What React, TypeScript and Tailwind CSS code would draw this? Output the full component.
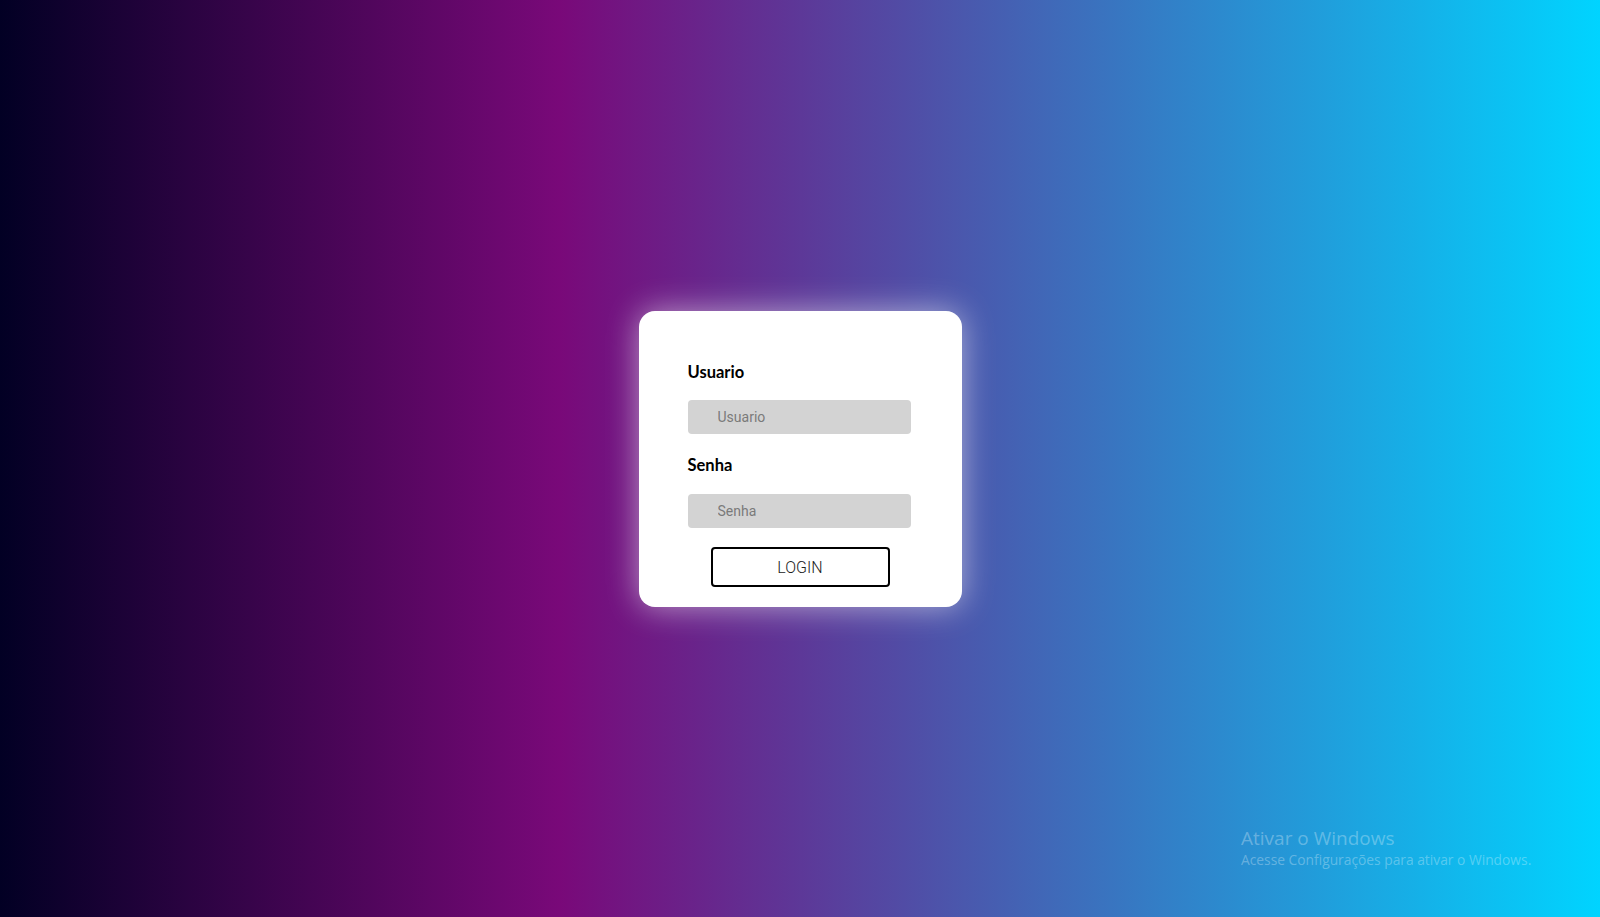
export default function App() {
  return (
    <div className="relative flex h-screen w-full items-center justify-center overflow-hidden bg-[linear-gradient(90deg,#020024_0%,#790979_35%,#00d4ff_100%)]">
      <div className="flex h-[296px] w-[323px] flex-col rounded-2xl bg-white px-[49px] pt-[49px] shadow-[0_0_32px_rgba(255,255,255,0.55)]">
        <label className="block font-['Lato',sans-serif] text-[16.5px] leading-[24px] font-bold text-black">Usuario</label>
        <input
          className="mt-[16px] h-[34px] w-[223px] rounded bg-[#d3d3d3] pl-[30px] font-['Roboto',sans-serif] text-sm text-black outline-none placeholder:text-[#7a7a7a]"
          placeholder="Usuario"
          type="text"
        />
        <label className="mt-[19px] block font-['Lato',sans-serif] text-[16.5px] leading-[24px] font-bold text-black">Senha</label>
        <input
          className="mt-[17px] h-[34px] w-[223px] rounded bg-[#d3d3d3] pl-[30px] font-['Roboto',sans-serif] text-sm text-black outline-none placeholder:text-[#7a7a7a]"
          placeholder="Senha"
          type="password"
        />
        <button
          type="button"
          className="mx-auto mt-[19px] h-[40px] w-[179px] rounded border-2 border-black bg-white pt-[2px] font-['Roboto',sans-serif] text-base font-light text-[#222]"
        >
          LOGIN
        </button>
      </div>

      {/* Windows activation watermark */}
      <div className="pointer-events-none absolute top-[826px] left-[1241px] font-['Open_Sans',sans-serif] text-white/30">
        <div className="text-[19px] leading-[24px]">Ativar o Windows</div>
        <div className="text-[13.8px] leading-[20px]">Acesse Configurações para ativar o Windows.</div>
      </div>
    </div>
  );
}
